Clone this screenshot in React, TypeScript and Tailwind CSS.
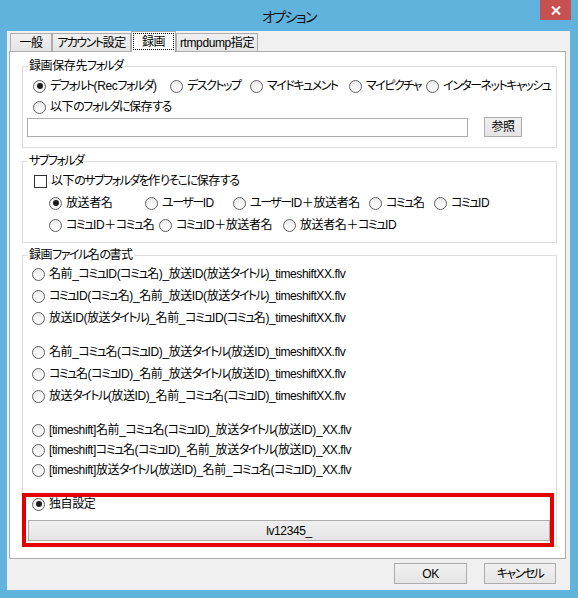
import React from 'react';

const ui = "font-['Liberation_Sans','Noto_Sans_CJK_JP',sans-serif] [font-feature-settings:'palt'] text-[12px] leading-none tracking-[-0.4px] text-black";

// kana runs are drawn tighter, like the narrow kana of the system UI font
function Txt({ s }: { s: string }) {
  const parts = s.split(/([\u3040-\u30ff]+)/);
  return (
    <>
      {parts.map((p, i) =>
        i % 2 === 1 ? (
          <span key={i} className="tracking-[-1.5px]">{p}</span>
        ) : (
          <span key={i}>{p}</span>
        )
      )}
    </>
  );
}

function RadioDot({ checked = false }: { checked?: boolean }) {
  return (
    <span className="w-[13px] h-[13px] shrink-0 rounded-full border border-[#5f5f5f] bg-linear-to-b from-[#ececec] to-white flex items-center justify-center">
      {checked && <span className="w-[6px] h-[6px] rounded-full bg-[#1c1c1c]" />}
    </span>
  );
}

function Radio({ label, checked = false, w = '' }: { label: string; checked?: boolean; w?: string }) {
  return (
    <div className={`flex items-center gap-[4px] shrink-0 whitespace-nowrap ${w}`}>
      <RadioDot checked={checked} />
      <span>
        <Txt s={label} />
      </span>
    </div>
  );
}

function Group({ title, className = '', children }: { title: string; className?: string; children: React.ReactNode }) {
  return (
    <fieldset className={`w-[535px] ml-[12px] border border-[#dcdcdc] ${className}`}>
      <legend className="ml-[5px] px-[1px] leading-[14px]">
        <Txt s={title} />
      </legend>
      {children}
    </fieldset>
  );
}

function WinButton({ children, className = '' }: { children: React.ReactNode; className?: string }) {
  return (
    <div className={`border border-[#acacac] bg-linear-to-b from-[#f0f0f0] to-[#e5e5e5] flex items-center justify-center whitespace-nowrap ${className}`}>
      {children}
    </div>
  );
}

function Tab({ label, w }: { label: string; w: string }) {
  return (
    <div className={`h-[18px] border border-b-0 border-[#acacac] bg-linear-to-b from-[#f0f0f0] to-[#e5e5e5] flex items-center justify-center whitespace-nowrap ${w}`}>
      <Txt s={label} />
    </div>
  );
}

const fileFormats = [
  ['名前_コミュID(コミュ名)_放送ID(放送タイトル)_timeshiftXX.flv', 'コミュID(コミュ名)_名前_放送ID(放送タイトル)_timeshiftXX.flv', '放送ID(放送タイトル)_名前_コミュID(コミュ名)_timeshiftXX.flv'],
  ['名前_コミュ名(コミュID)_放送タイトル(放送ID)_timeshiftXX.flv', 'コミュ名(コミュID)_名前_放送タイトル(放送ID)_timeshiftXX.flv', '放送タイトル(放送ID)_名前_コミュ名(コミュID)_timeshiftXX.flv'],
  ['[timeshift]名前_コミュ名(コミュID)_放送タイトル(放送ID)_XX.flv', '[timeshift]コミュ名(コミュID)_名前_放送タイトル(放送ID)_XX.flv', '[timeshift]放送タイトル(放送ID)_名前_コミュ名(コミュID)_XX.flv'],
];

export default function App() {
  return (
    <div className={`w-[578px] h-[598px] bg-[#60b3dc] flex flex-col ${ui}`}>
      {/* title bar */}
      <div className="h-[31px] flex items-start shrink-0">
        <div className="w-[38px]" />
        <div className="flex-1 h-[31px] flex items-center justify-center text-[14px] tracking-normal text-[#111] font-['Noto_Sans_CJK_JP',sans-serif]">
          <Txt s="オプション" />
        </div>
        <div className="w-[31px] h-[20px] mr-[7px] bg-[#c75050] flex items-center justify-center">
          <svg width="10" height="9" viewBox="0 0 10 9">
            <path d="M1 0.5 L9 8.5 M9 0.5 L1 8.5" stroke="white" strokeWidth="2" />
          </svg>
        </div>
      </div>

      {/* client */}
      <div className="ml-[7px] w-[563px] h-[559px] bg-[#f0f0f0] flex flex-col">
        {/* tabs */}
        <div className="h-[20px] flex items-end pl-[3px] shrink-0">
          <Tab label="一般" w="w-[42px]" />
          <Tab label="アカウント設定" w="w-[79px]" />
          <div className="relative z-10 w-[45px] h-[21px] mb-[-1px] border border-b-0 border-[#acacac] bg-white flex items-start justify-center pt-[1px]">
            <span className="w-[41px] h-[17px] border border-dotted border-black flex items-center justify-center">録画</span>
          </div>
          <Tab label="rtmpdump指定" w="w-[82px]" />
        </div>

        {/* panel */}
        <div className="ml-[2px] w-[557px] h-[508px] border border-[#acacac] bg-white flex flex-col shrink-0">
          <Group title="録画保存先フォルダ" className="mt-[7px]">
            <div className="pt-[2px] pb-[10px]">
              <div className="h-[22px] flex items-center pl-[10px]">
                <Radio label="デフォルト(Recフォルダ)" checked w="w-[137px]" />
                <Radio label="デスクトップ" w="w-[80px]" />
                <Radio label="マイドキュメント" w="w-[99px]" />
                <Radio label="マイピクチャ" w="w-[77px]" />
                <Radio label="インターネットキャッシュ" />
              </div>
              <div className="h-[20px] flex items-center pl-[10px]">
                <Radio label="以下のフォルダに保存する" />
              </div>
              <div className="h-[20px] flex items-center pl-[4px]">
                <div className="w-[441px] h-[19px] border border-[#abadb3] bg-white" />
                <WinButton className="ml-[16px] w-[38px] h-[20px]">参照</WinButton>
              </div>
            </div>
          </Group>

          <Group title="サブフォルダ" className="mt-[6px]">
            <div className="pt-[2px] pb-[6px]">
              <div className="h-[22px] flex items-center pl-[11px] gap-[4px] whitespace-nowrap">
                <span className="w-[13px] h-[13px] border border-[#333] bg-white shrink-0" />
                <span>
                  <Txt s="以下のサブフォルダを作りそこに保存する" />
                </span>
              </div>
              <div className="h-[22px] flex items-center pl-[26px]">
                <Radio label="放送者名" checked w="w-[96px]" />
                <Radio label="ユーザーID" w="w-[88px]" />
                <Radio label="ユーザーID＋放送者名" w="w-[136px]" />
                <Radio label="コミュ名" w="w-[65px]" />
                <Radio label="コミュID" />
              </div>
              <div className="h-[22px] flex items-center pl-[26px]">
                <Radio label="コミュID＋コミュ名" w="w-[110px]" />
                <Radio label="コミュID＋放送者名" w="w-[124px]" />
                <Radio label="放送者名＋コミュID" />
              </div>
            </div>
          </Group>

          <Group title="録画ファイル名の書式" className="mt-[5px]">
            <div className="pt-[1px] flex flex-col">
              {fileFormats.map((block, i) => (
                <div key={i} className={i === 0 ? '' : i === 1 ? 'mt-[12px]' : 'mt-[13px]'}>
                  {block.map((f) => (
                    <div key={f} className={`${i === 2 ? 'h-[20px]' : 'h-[22px]'} flex items-center pl-[9px]`}>
                      <Radio label={f} />
                    </div>
                  ))}
                </div>
              ))}
              <div className="mt-[13px] ml-[-1px] mr-[2px] mb-[-1px] h-[54px] border-4 border-[#e50000] flex flex-col">
                <div className="h-[14px] flex items-center pl-[6px]">
                  <Radio label="独自設定" checked />
                </div>
                <WinButton className="mt-[9px] ml-[2px] h-[21px]">lv12345_</WinButton>
              </div>
            </div>
          </Group>
        </div>

        {/* dialog buttons */}
        <div className="mt-[4px] pr-[14px] flex justify-end gap-[17px]">
          <WinButton className="w-[73px] h-[21px]">OK</WinButton>
          <WinButton className="w-[72px] h-[21px]">
            <Txt s="キャンセル" />
          </WinButton>
        </div>
      </div>
    </div>
  );
}
